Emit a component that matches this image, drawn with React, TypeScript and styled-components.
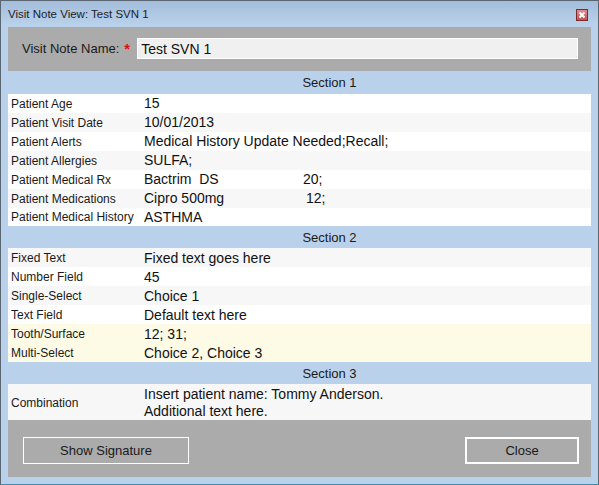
import React from "react";
import styled, { createGlobalStyle } from "styled-components";

const GlobalStyle = createGlobalStyle`
  html, body {
    margin: 0;
    padding: 0;
    background: #ffffff;
  }
  body {
    font-family: "Liberation Sans", Arial, sans-serif;
  }
`;

const Window = styled.div`
  width: 599px;
  height: 485px;
  box-sizing: border-box;
  border: 1px solid #5b6673;
  border-bottom-color: #3f8fa8;
  background: linear-gradient(to bottom, #a3bddb 0px, #b9d1ea 24px, #b9d1ea 100%);
  display: flex;
  flex-direction: column;
  padding: 0 7px 7px 7px;
  color: #111111;
`;

const TitleBar = styled.div`
  height: 25px;
  display: flex;
  align-items: center;
  justify-content: space-between;
  padding-top: 1px;
  font-size: 11.5px;
  color: #1d1d2b;
`;

const CloseBox = styled.div`
  width: 12px;
  height: 12px;
  box-sizing: border-box;
  border: 1px solid #7a2a2a;
  background: linear-gradient(to bottom, #e08c8c, #c25454);
  display: flex;
  align-items: center;
  justify-content: center;
  margin-right: 3px;
  margin-top: 2px;
`;

const HeaderPanel = styled.div`
  height: 44px;
  background: #ababab;
  display: flex;
  align-items: center;
  padding: 0 13px 0 14px;
  font-size: 13px;
`;

const NameLabel = styled.span`
  color: #1a1a1a;
`;

const Required = styled.span`
  color: #e01010;
  font-size: 15px;
  font-weight: bold;
  margin: 0 7px 0 5px;
`;

const NameInput = styled.div`
  flex: 1;
  height: 21px;
  box-sizing: border-box;
  border: 1px solid #ffffff;
  background: #f0f0f0;
  padding: 1px 0 0 3px;
  display: flex;
  align-items: center;
  font-size: 14px;
`;

const SectionHeader = styled.div<{ $h: number }>`
  height: ${(p) => p.$h}px;
  display: flex;
  align-items: center;
  justify-content: center;
  padding: 1px 0 0 60px;
  box-sizing: border-box;
  font-size: 13px;
  color: #1a1a1a;
`;

const Row = styled.div<{ $bg: string; $h?: number }>`
  display: grid;
  grid-template-columns: 133px 1fr;
  height: ${(p) => p.$h ?? 19}px;
  background: ${(p) => p.$bg};
  align-items: center;
`;

const Label = styled.div`
  padding: 1px 0 0 3px;
  font-size: 12px;
  color: #1a1a1a;
  white-space: nowrap;
`;

const Value = styled.div`
  padding: 1px 0 0 3px;
  font-size: 14px;
  line-height: 17px;
  color: #111111;
  white-space: pre;
`;

const Cell = styled.span<{ $w: number }>`
  display: inline-block;
  width: ${(p) => p.$w}px;
`;

const Footer = styled.div`
  height: 57px;
  background: #ababab;
  display: flex;
  justify-content: space-between;
  align-items: flex-start;
  padding: 17px 12px 0 15px;
  box-sizing: border-box;
`;

const Button = styled.button<{ $w: number; $focus?: boolean }>`
  width: ${(p) => p.$w}px;
  height: 27px;
  box-sizing: border-box;
  border: ${(p) => (p.$focus ? 2 : 1)}px solid #ffffff;
  background: transparent;
  font-family: "Liberation Sans", Arial, sans-serif;
  font-size: 13px;
  color: #1a1a1a;
  padding: 0;
`;

const WHITE = "#ffffff";
const GREY = "#f7f7f7";
const YELLOW = "#fdfae6";

type Field = { label: string; value: React.ReactNode; bg: string };

const section1: Field[] = [
  { label: "Patient Age", value: "15", bg: WHITE },
  { label: "Patient Visit Date", value: "10/01/2013", bg: GREY },
  { label: "Patient Alerts", value: "Medical History Update Needed;Recall;", bg: WHITE },
  { label: "Patient Allergies", value: "SULFA;", bg: GREY },
  {
    label: "Patient Medical Rx",
    value: (
      <>
        <Cell $w={159}>Bactrim  DS</Cell>20;
      </>
    ),
    bg: WHITE,
  },
  {
    label: "Patient Medications",
    value: (
      <>
        <Cell $w={162}>Cipro 500mg</Cell>12;
      </>
    ),
    bg: GREY,
  },
  { label: "Patient Medical History", value: "ASTHMA", bg: WHITE },
];

const section2: Field[] = [
  { label: "Fixed Text", value: "Fixed text goes here", bg: GREY },
  { label: "Number Field", value: "45", bg: WHITE },
  { label: "Single-Select", value: "Choice 1", bg: GREY },
  { label: "Text Field", value: "Default text here", bg: WHITE },
  { label: "Tooth/Surface", value: "12; 31;", bg: YELLOW },
  { label: "Multi-Select", value: "Choice 2, Choice 3", bg: YELLOW },
];

const Rows = ({ fields }: { fields: Field[] }) => (
  <>
    {fields.map((f) => (
      <Row key={f.label} $bg={f.bg}>
        <Label>{f.label}</Label>
        <Value>{f.value}</Value>
      </Row>
    ))}
  </>
);

export default function App() {
  return (
    <>
      <GlobalStyle />
      <Window>
        <TitleBar>
          <span>Visit Note View: Test SVN 1</span>
          <CloseBox>
            <svg width="8" height="8" viewBox="0 0 8 8">
              <path d="M1.5 1.5 L6.5 6.5 M6.5 1.5 L1.5 6.5" stroke="#ffffff" strokeWidth="2" />
            </svg>
          </CloseBox>
        </TitleBar>
        <HeaderPanel>
          <NameLabel>Visit Note Name:</NameLabel>
          <Required>*</Required>
          <NameInput>Test SVN 1</NameInput>
        </HeaderPanel>
        <SectionHeader $h={23}>Section 1</SectionHeader>
        <Rows fields={section1} />
        <SectionHeader $h={22}>Section 2</SectionHeader>
        <Rows fields={section2} />
        <SectionHeader $h={22}>Section 3</SectionHeader>
        <Row $bg={GREY} $h={36}>
          <Label>Combination</Label>
          <Value>
            {"Insert patient name: Tommy Anderson.\nAdditional text here."}
          </Value>
        </Row>
        <Footer>
          <Button $w={166}>Show Signature</Button>
          <Button $w={114} $focus>
            Close
          </Button>
        </Footer>
      </Window>
    </>
  );
}
